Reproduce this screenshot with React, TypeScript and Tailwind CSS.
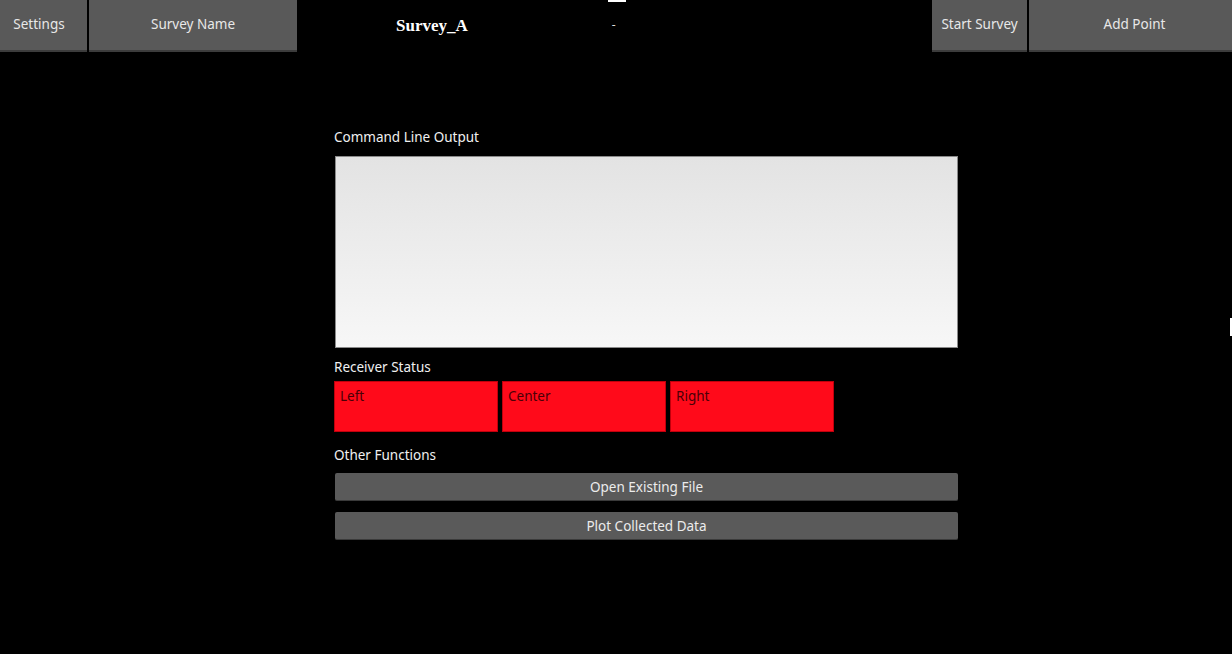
import React from 'react';

const sans = { fontFamily: '"Noto Sans", "Open Sans", sans-serif' };

function BarButton({ label, width, shift = '' }: { label: string; width: string; shift?: string }) {
  return (
    <button
      className={`${width} ${shift} h-[52px] pb-[1px] bg-[#595959] border-b-2 border-[#3c3c3c] text-[#e8e8e8] text-[13.5px] flex items-center justify-center`}
    >
      {label}
    </button>
  );
}

function StatusBox({ label }: { label: string }) {
  return (
    <div className="w-[164px] h-[51px] bg-[#ff0a1a] border border-[#c0000c] px-[5px] pt-[4px] text-[13.5px] leading-[20px] text-[#4a0006]">
      {label}
    </div>
  );
}

function WideButton({ label }: { label: string }) {
  return (
    <button className="ml-px w-[623px] h-[28px] pt-[2px] bg-[#5a5a5a] border-b border-[#3a3a3a] rounded-[2px] text-[#ececec] text-[13.5px] flex items-center justify-center">
      {label}
    </button>
  );
}

export default function App() {
  return (
    <div className="relative w-[1232px] h-[654px] bg-black overflow-hidden" style={sans}>
      <div className="flex h-[52px] gap-[2px]">
        <BarButton label="Settings" width="w-[87px]" shift="pr-[9px]" />
        <BarButton label="Survey Name" width="w-[208px]" />
        <div className="relative flex-1 flex items-center pl-[97px] gap-[144px]">
          <div className="absolute top-0 left-[309px] w-[18px] h-[2px] bg-white" />
          <span
            className="text-white text-[17px] font-bold"
            style={{ fontFamily: '"Liberation Serif", serif' }}
          >
            Survey_A
          </span>
          <span className="text-[#dddddd] text-[12px] pb-[2px]">-</span>
        </div>
        <BarButton label="Start Survey" width="w-[95px]" />
        <BarButton label="Add Point" width="w-[203px]" shift="pl-[8px]" />
      </div>

      <div className="absolute right-0 top-[318px] w-[2px] h-[18px] bg-white" />

      <div className="pl-[334px] pt-[75px] flex flex-col">
        <div className="text-[#f0f0f0] text-[13.5px] leading-[20px] mb-[9px]">Command Line Output</div>
        <div className="ml-px w-[623px] h-[192px] border border-[#8a8a8a] bg-gradient-to-b from-[#e3e3e3] to-[#f7f7f7]" />

        <div className="text-[#f0f0f0] text-[13.5px] leading-[20px] mt-[9px] mb-[4px]">Receiver Status</div>
        <div className="flex gap-[4px]">
          <StatusBox label="Left" />
          <StatusBox label="Center" />
          <StatusBox label="Right" />
        </div>

        <div className="text-[#f0f0f0] text-[13.5px] leading-[20px] mt-[13px] mb-[8px]">Other Functions</div>
        <div className="flex flex-col gap-[11px]">
          <WideButton label="Open Existing File" />
          <WideButton label="Plot Collected Data" />
        </div>
      </div>
    </div>
  );
}
